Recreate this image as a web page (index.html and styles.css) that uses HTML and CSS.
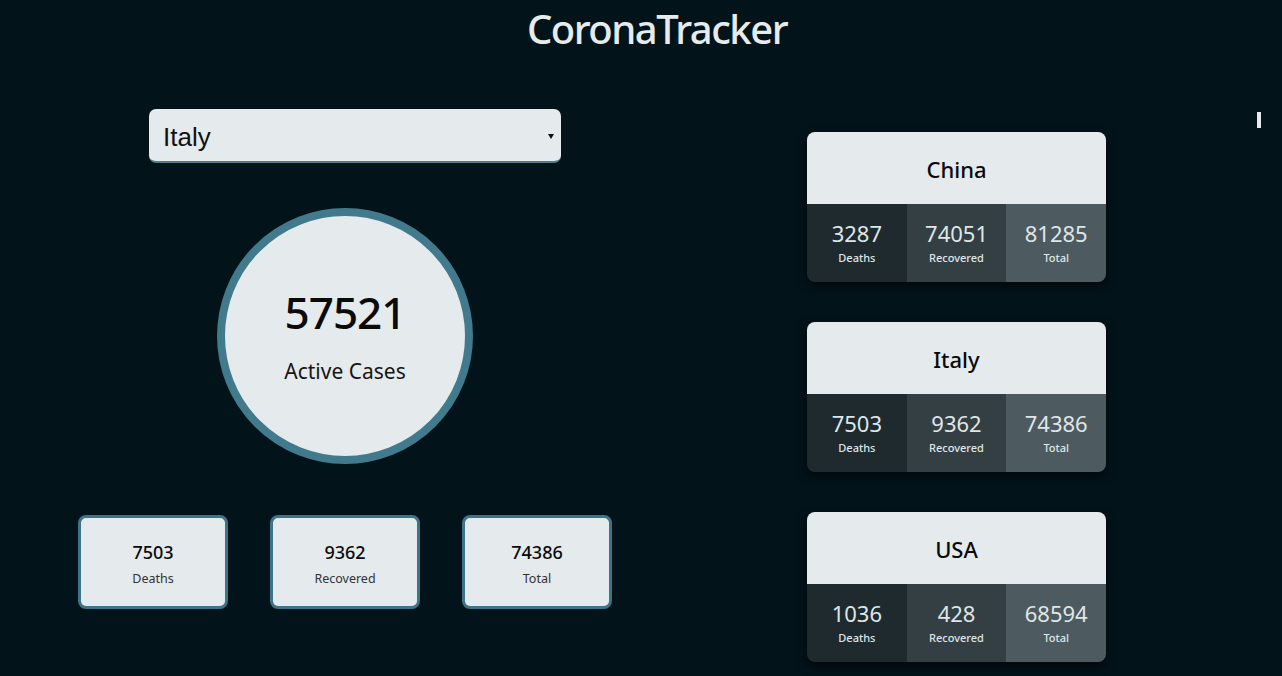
FILE: index.html
```html
<!DOCTYPE html>
<html>
<head>
<meta charset="utf-8">
<link rel="stylesheet" href="styles.css">
</head>
<body>
<h1 class="title">CoronaTracker</h1>
<div class="scroll-mark"></div>
<main class="layout">
  <section class="left">
    <div class="select-wrap">
      <select class="country-select">
        <option>Italy</option>
      </select>
    </div>
    <div class="circle">
      <div class="circle-num">57521</div>
      <div class="circle-label">Active Cases</div>
    </div>
    <div class="stat-row">
      <div class="stat-box"><div class="stat-num">7503</div><div class="stat-label">Deaths</div></div>
      <div class="stat-box"><div class="stat-num">9362</div><div class="stat-label">Recovered</div></div>
      <div class="stat-box"><div class="stat-num">74386</div><div class="stat-label">Total</div></div>
    </div>
  </section>
  <section class="right">
    <div class="card">
      <div class="card-head">China</div>
      <div class="card-body">
        <div class="cell c1"><div class="cell-num">3287</div><div class="cell-label">Deaths</div></div>
        <div class="cell c2"><div class="cell-num">74051</div><div class="cell-label">Recovered</div></div>
        <div class="cell c3"><div class="cell-num">81285</div><div class="cell-label">Total</div></div>
      </div>
    </div>
    <div class="card">
      <div class="card-head">Italy</div>
      <div class="card-body">
        <div class="cell c1"><div class="cell-num">7503</div><div class="cell-label">Deaths</div></div>
        <div class="cell c2"><div class="cell-num">9362</div><div class="cell-label">Recovered</div></div>
        <div class="cell c3"><div class="cell-num">74386</div><div class="cell-label">Total</div></div>
      </div>
    </div>
    <div class="card">
      <div class="card-head">USA</div>
      <div class="card-body">
        <div class="cell c1"><div class="cell-num">1036</div><div class="cell-label">Deaths</div></div>
        <div class="cell c2"><div class="cell-num">428</div><div class="cell-label">Recovered</div></div>
        <div class="cell c3"><div class="cell-num">68594</div><div class="cell-label">Total</div></div>
      </div>
    </div>
  </section>
</main>
</body>
</html>
```
FILE: styles.css
```css
* { box-sizing: border-box; }
html, body { margin: 0; padding: 0; }
body {
  background: #03131a;
  font-family: "Noto Sans", "Open Sans", sans-serif;
  color: #e6ebed;
  height: 676px;
  overflow: hidden;
  position: relative;
}
.title {
  margin: 0;
  padding-top: 4px;
  padding-left: 32px;
  height: 58px;
  text-align: center;
  font-size: 40px;
  font-weight: 500;
  letter-spacing: -1.5px;
  line-height: 50px;
  color: #e6ebed;
}
.scroll-mark {
  position: absolute;
  left: 1257px;
  top: 112px;
  width: 4px;
  height: 16px;
  background: #e6ebed;
}
.layout {
  display: flex;
}
.left {
  width: 690px;
  display: flex;
  flex-direction: column;
  align-items: center;
}
.select-wrap {
  margin-top: 51px;
  margin-left: 20px;
  width: 412px;
  height: 54px;
  border-radius: 7px;
  background: #e5eaed;
  border-bottom: 2px solid #4a7f90;
  position: relative;
}
.country-select {
  appearance: none;
  -webkit-appearance: none;
  width: 100%;
  height: 52px;
  border: none;
  background: transparent;
  font-family: "Liberation Sans", Arial, sans-serif;
  font-size: 26px;
  color: #111;
  padding: 4px 14px 0;
  outline: none;
}
.select-wrap::after {
  content: "";
  position: absolute;
  right: 7px;
  top: 25px;
  border-left: 3px solid transparent;
  border-right: 3px solid transparent;
  border-top: 5px solid #111;
}
.circle {
  margin-top: 45px;
  width: 256px;
  height: 256px;
  border-radius: 50%;
  border: 8px solid #417a8c;
  background: #e5eaed;
  color: #0a0a0a;
  display: flex;
  flex-direction: column;
  align-items: center;
  justify-content: center;
}
.circle-num {
  font-size: 44px;
  font-weight: 500;
  letter-spacing: -1px;
  line-height: 50px;
  margin-top: 0;
}
.circle-label {
  font-size: 21px;
  margin-top: 20px;
  line-height: 28px;
  color: #151515;
}
.stat-row {
  margin-top: 51px;
  display: flex;
  gap: 42px;
}
.stat-box {
  flex: 0 0 150px;
  width: 150px;
  height: 94px;
  border: 3px solid #3f7488;
  border-radius: 8px;
  background: #e5eaed;
  color: #0a0a0a;
  display: flex;
  flex-direction: column;
  align-items: center;
  justify-content: center;
}
.stat-num {
  font-size: 18px;
  font-weight: 500;
  line-height: 24px;
  margin-top: 4px;
}
.stat-label {
  font-size: 12.5px;
  color: #333;
  line-height: 18px;
  margin-top: 6px;
}
.right {
  padding-left: 117px;
  padding-top: 74px;
  display: flex;
  flex-direction: column;
  gap: 40px;
}
.card {
  width: 299px;
  height: 150px;
  border-radius: 8px;
  overflow: hidden;
  box-shadow: 0 4px 10px rgba(0,0,0,0.6);
}
.card-head {
  height: 72px;
  background: #e5eaed;
  color: #0a0a0a;
  display: flex;
  align-items: center;
  justify-content: center;
  font-size: 22px;
  font-weight: 500;
  padding-top: 1px;
}
.card-body {
  height: 78px;
  display: flex;
}
.cell {
  flex: 1;
  display: flex;
  flex-direction: column;
  align-items: center;
  justify-content: center;
  color: #dfe6e8;
}
.c1 { background: #1f2a2f; }
.c2 { background: #343f44; }
.c3 { background: #4d5a5f; }
.cell-num {
  font-size: 22px;
  line-height: 26px;
  margin-top: -2px;
}
.cell-label {
  font-size: 11px;
  font-weight: 500;
  line-height: 14px;
  margin-top: 5px;
}
```
